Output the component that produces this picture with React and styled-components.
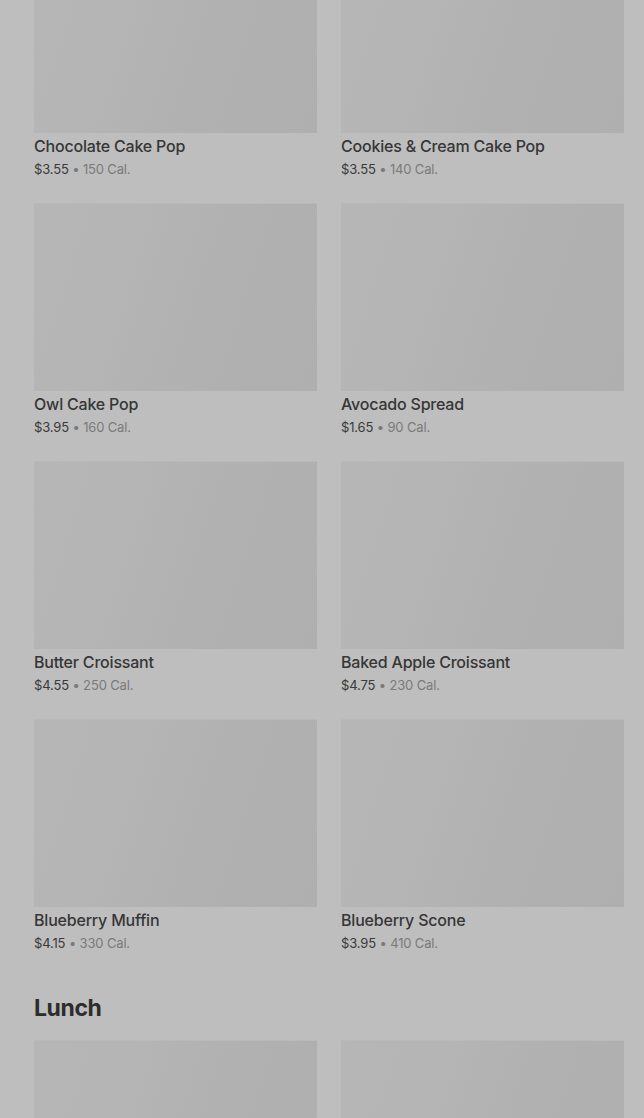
import React from "react";
import styled, { createGlobalStyle } from "styled-components";

const Global = createGlobalStyle`
  html, body { margin: 0; padding: 0; background: #bebebe; }
  body { font-family: Inter, "Noto Sans", "Liberation Sans", sans-serif; -webkit-font-smoothing: antialiased; }
`;

const Page = styled.div`
  width: 644px;
  height: 1118px;
  overflow: hidden;
  background: #bebebe;
`;

const Content = styled.div`
  margin-top: -55px;
  padding: 0 20px 0 34px;
  display: flex;
  flex-direction: column;
`;

const Grid = styled.div`
  display: grid;
  grid-template-columns: 283px 283px;
  column-gap: 24px;
  row-gap: 25px;
`;

const Card = styled.div`
  display: flex;
  flex-direction: column;
`;

const Thumb = styled.div`
  height: 188px;
  background: linear-gradient(108deg, #b6b6b6 0%, #b5b5b5 30%, #b2b2b2 52%, #b0b0b0 75%, #afafaf 100%);
  border-top: 1px solid #b9b9b9;
  box-sizing: border-box;
`;

const Name = styled.div`
  margin-top: 3px;
  font-size: 16px;
  line-height: 20px;
  font-weight: 500;
  color: #363636;
  letter-spacing: -0.2px;
`;

const Meta = styled.div`
  margin-top: 4px;
  font-size: 13px;
  line-height: 18px;
  color: #7a7a7a;
  letter-spacing: -0.15px;
`;

const Price = styled.span`
  color: #3a3a3a;
`;

const Heading = styled.h2`
  margin: 40px 0 16px;
  font-size: 23px;
  line-height: 32px;
  font-weight: 700;
  color: #2c2c2c;
  letter-spacing: -0.4px;
`;

const items = [
  ["Chocolate Cake Pop", "$3.55", "150 Cal."],
  ["Cookies & Cream Cake Pop", "$3.55", "140 Cal."],
  ["Owl Cake Pop", "$3.95", "160 Cal."],
  ["Avocado Spread", "$1.65", "90 Cal."],
  ["Butter Croissant", "$4.55", "250 Cal."],
  ["Baked Apple Croissant", "$4.75", "230 Cal."],
  ["Blueberry Muffin", "$4.15", "330 Cal."],
  ["Blueberry Scone", "$3.95", "410 Cal."],
];

export default function App() {
  return (
    <Page>
      <Global />
      <Content>
        <Grid>
          {items.map(([n, p, c]) => (
            <Card key={n}>
              <Thumb />
              <Name>{n}</Name>
              <Meta>
                <Price>{p}</Price> • {c}
              </Meta>
            </Card>
          ))}
        </Grid>
        <Heading>Lunch</Heading>
        <Grid>
          <Card><Thumb /></Card>
          <Card><Thumb /></Card>
        </Grid>
      </Content>
    </Page>
  );
}
